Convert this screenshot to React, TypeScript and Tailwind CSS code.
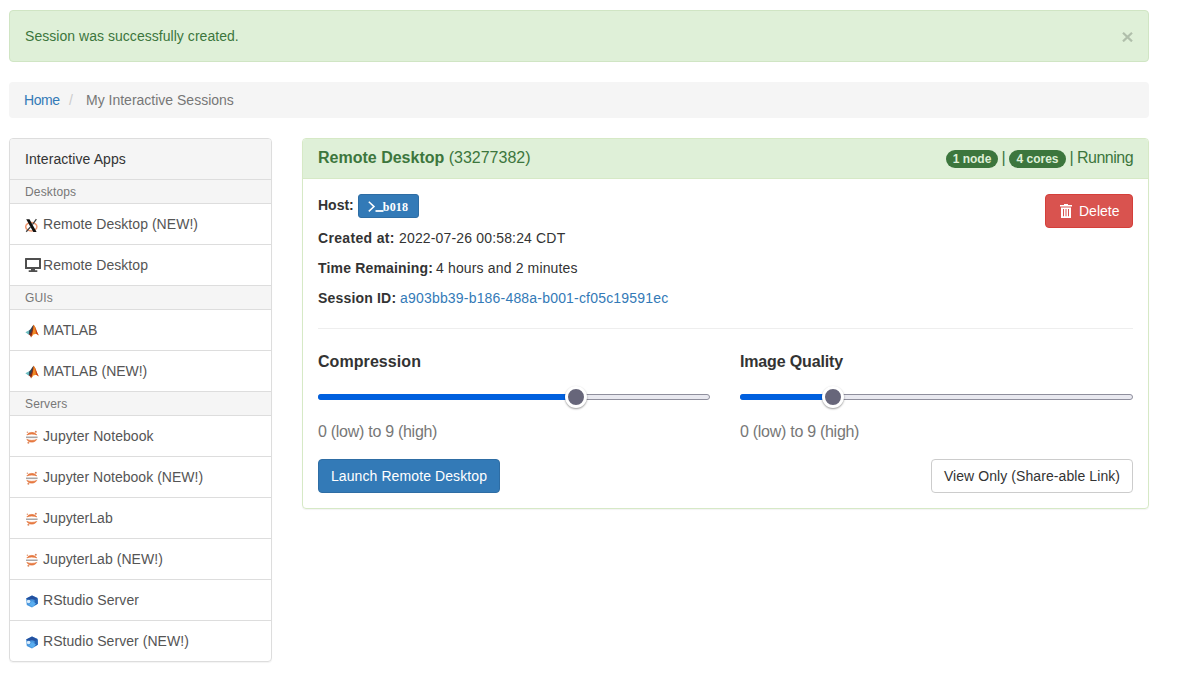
import React from "react";

function XorgIcon() {
  return (
    <svg width="14" height="15" viewBox="0 0 14 15" fill="none">
      <ellipse cx="6.3" cy="8.8" rx="5.6" ry="4.2" stroke="#e8743f" strokeWidth="1.5" strokeOpacity=".75" />
      <path d="M1.2 1.2h3.3L11.6 14H8.3z" fill="#111" />
      <path d="M11.4 1.2L7.4 6.6M5.7 8.6L1.2 13.8" stroke="#444" strokeWidth="1.3" />
    </svg>
  );
}

function DesktopIcon() {
  return (
    <svg className="-mt-[3px]" width="16" height="14" viewBox="0 0 16 14" fill="#4f4f4f">
      <path fillRule="evenodd" d="M.6 0h14.8a.6.6 0 0 1 .6.6v9.8a.6.6 0 0 1-.6.6H10v1.3h2.3V14H3.7v-1.7H6V11H.6a.6.6 0 0 1-.6-.6V.6A.6.6 0 0 1 .6 0zM2 2v7h12V2z" />
    </svg>
  );
}

function MatlabIcon() {
  return (
    <svg className="-mt-px" width="14" height="14" viewBox="0 0 14 14">
      <path d="M0.4 8.2L4.2 6.2 6.3 8.4 3.8 10.8z" fill="#6bbcbf" />
      <path d="M4.2 6.2C5.6 5.8 6.8 2.6 8.6 .8L8 8.2 5.6 10.8 3.8 10.3z" fill="#2b4557" />
      <path d="M3.8 10.5L5.7 9.3C7 8 7.6 3 8.6.8 9.7 2 10 6 8.4 9.5L6 13.4C5.5 11.8 4.9 11 3.8 10.5z" fill="#8c2712" />
      <path d="M8.6.8C10.6 2.2 11.5 8 13.8 11.4 11.7 9.8 10 9.5 8.4 10.5L6 13.4C8 8.8 8.4 4 8.6.8z" fill="#f08a26" />
      <path d="M9.4 1.8C11 4.2 12 8.8 13.8 11.4L11 9.4C10.6 6.5 10.2 4 9.4 1.8z" fill="#c63d1a" />
    </svg>
  );
}

function JupyterIcon() {
  return (
    <svg className="-mt-px ml-px" width="12" height="14" viewBox="0 0 12 14" fill="none">
      <path d="M.9 4.9C3 1.6 8.6 1.6 10.7 4.9 8 3.7 3.6 3.7 .9 4.9z" fill="#e67840" stroke="#e67840" strokeWidth=".8" />
      <path d="M.9 9.5C3 12.9 8.6 12.9 10.7 9.5 8 10.7 3.6 10.7 .9 9.5z" fill="#e67840" stroke="#e67840" strokeWidth=".8" />
      <path d="M0 7.3h11.6" stroke="#a9a6a6" strokeWidth="1.6" />
      <circle cx="1.4" cy="2.2" r=".8" fill="#e09a75" />
      <circle cx="9.8" cy="1.7" r="1" fill="#d9825a" />
      <circle cx="2.4" cy="12.8" r="1" fill="#dd8a60" />
    </svg>
  );
}

function RStudioIcon() {
  return (
    <svg className="ml-px" width="12" height="13" viewBox="0 0 12 13">
      <path d="M6 .6l5.4 2.2.5 6L6 12.4.8 10 .1 3.6z" fill="#4795dc" />
      <path d="M6 .6l5.6 2.6-1.4 2L6 4.2 2 5 .1 3.6z" fill="#24509f" />
      <path d="M8.6 5l3.2-1.4v5.2L8.6 10.6z" fill="#2765b5" />
      <path d="M3 9.6L6 6l4 2.6-3.6 3.4z" fill="#5aaef0" />
      <circle cx="2.6" cy="6.5" r="1.8" fill="#d9ecfb" />
    </svg>
  );
}

function TrashIcon() {
  return (
    <svg width="12" height="14" viewBox="0 0 12 14" fill="#fff">
      <path d="M4 0h4v1h4v1.6H0V1h4z" />
      <path fillRule="evenodd" d="M1 3.4h10V14H1zM3 5v7.2h1V5zm2.5 0v7.2h1V5zM8 5v7.2h1V5z" />
    </svg>
  );
}

type AppLink = { label: string; spacing: string; icon: React.ReactNode };
type Group = { title: string; apps: AppLink[] };

const groups: Group[] = [
  {
    title: "Desktops",
    apps: [
      { label: "Remote Desktop (NEW!)", spacing: "tracking-[0.05px]", icon: <XorgIcon /> },
      { label: "Remote Desktop", spacing: "tracking-[0.05px]", icon: <DesktopIcon /> },
    ],
  },
  {
    title: "GUIs",
    apps: [
      { label: "MATLAB", spacing: "tracking-[-0.15px]", icon: <MatlabIcon /> },
      { label: "MATLAB (NEW!)", spacing: "tracking-[-0.05px]", icon: <MatlabIcon /> },
    ],
  },
  {
    title: "Servers",
    apps: [
      { label: "Jupyter Notebook", spacing: "tracking-[0.05px]", icon: <JupyterIcon /> },
      { label: "Jupyter Notebook (NEW!)", spacing: "tracking-[0.03px]", icon: <JupyterIcon /> },
      { label: "JupyterLab", spacing: "tracking-[0.05px]", icon: <JupyterIcon /> },
      { label: "JupyterLab (NEW!)", spacing: "tracking-[0.05px]", icon: <JupyterIcon /> },
      { label: "RStudio Server", spacing: "tracking-[0.08px]", icon: <RStudioIcon /> },
      { label: "RStudio Server (NEW!)", spacing: "tracking-[0.06px]", icon: <RStudioIcon /> },
    ],
  },
];

function Sidebar() {
  return (
    <nav className="h-[524px] w-[263px] shrink-0 overflow-hidden rounded-[4px] border border-[#dddddd] shadow-[0_1px_1px_rgba(0,0,0,0.05)]">
      <div className="flex h-10 items-center bg-[#f5f5f5] pl-[15px] tracking-[0.08px] text-[#333333]">Interactive Apps</div>
      {groups.map((g) => (
        <div key={g.title}>
          <div className="flex h-6 items-center border-t border-[#dddddd] bg-[#f5f5f5] pl-[15px] text-[12px] tracking-[0.15px] text-[#777777]">
            {g.title}
          </div>
          {g.apps.map((a) => (
            <a key={a.label} className="flex h-[41px] items-center border-t border-[#dddddd] pl-[15px] text-[#555555]">
              <span className="flex w-[18px] shrink-0 pt-[3px]">{a.icon}</span>
              <span className={a.spacing}>{a.label}</span>
            </a>
          ))}
        </div>
      ))}
    </nav>
  );
}

function Slider({ label, value, spacing }: { label: string; value: number; spacing: string }) {
  return (
    <div>
      <div className={`pt-px text-[16px] leading-[22px] font-bold text-[#333333] ${spacing}`}>{label}</div>
      <div className="relative mt-[21px] h-[6px] rounded-full border border-[#8f8f9d] bg-[#e9e9f0]">
        <div className="absolute -top-px -left-px h-[6px] rounded-l-full bg-[#0060df]" style={{ width: `${value}%` }} />
        <div
          className="absolute -top-[9px] -ml-[11px] size-[22px] rounded-full border-3 border-white bg-[#67667a] shadow-[0_1px_2px_rgba(0,0,0,0.4)]"
          style={{ left: `${value}%` }}
        />
      </div>
      <div className="mt-[21px] text-[16px] leading-[22px] tracking-[-0.28px] text-[#777777]">0 (low) to 9 (high)</div>
    </div>
  );
}

export default function App() {
  return (
    <div className="h-[679px] w-[1191px] overflow-hidden bg-white pt-[10px] pl-[9px] font-['Liberation_Sans',Arial,sans-serif] text-[14px] leading-5 text-[#333333]">
      <div className="w-[1140px]">
        <div className="flex h-[52px] items-center justify-between rounded-[4px] border border-[#d0e5c4] bg-[#dff0d8] px-[15px] text-[#3c763d]">
          <span className="tracking-[0.04px]">Session was successfully created.</span>
          <svg className="mt-[2px]" width="11" height="10" viewBox="0 0 11 10" stroke="#b0bfab" strokeWidth="2.2">
            <path d="M1 .8l9 8.6M10 .8L1 9.4" />
          </svg>
        </div>

        <div className="mt-5 flex h-9 items-center rounded-[4px] bg-[#f5f5f5] pl-[15px]">
          <a className="w-9 tracking-[-0.4px] text-[#337ab7]">Home</a>
          <span className="ml-[9px] w-[17px] text-[#cccccc]">/</span>
          <span className="text-[#777777]">My Interactive Sessions</span>
        </div>

        <div className="mt-5 flex items-start gap-[30px]">
          <Sidebar />
          <section className="h-[371px] w-[847px] rounded-[4px] border border-[#d6e9c6] shadow-[0_1px_1px_rgba(0,0,0,0.05)]">
            <header className="flex h-10 items-center justify-between rounded-t-[3px] border-b border-[#d6e9c6] bg-[#dff0d8] px-[15px] pb-[2px] text-[16px] text-[#3c763d]">
              <div>
                <b>Remote Desktop</b> (33277382)
              </div>
              <div className="flex items-center">
                <span className="mt-[3px] flex h-[18px] w-[52px] items-center justify-center rounded-full bg-[#3c763d] text-[12px] font-bold text-[#dff0d8]">
                  1 node
                </span>
                <span className="w-[11px] text-center">|</span>
                <span className="mt-[3px] flex h-[18px] w-[57px] items-center justify-center rounded-full bg-[#3c763d] text-[12px] font-bold text-[#dff0d8]">
                  4 cores
                </span>
                <span className="w-[11px] text-center">|</span>
                <span className="w-14 tracking-[-0.5px]">Running</span>
              </div>
            </header>

            <div className="px-[15px] pt-[15px]">
              <div className="flex h-[134px] items-start justify-between">
                <div className="whitespace-nowrap">
                  <div className="flex h-6 items-center">
                    <b className="-mt-[2px]">Host:</b>
                    <a className="ml-1 flex h-6 w-[61px] items-center rounded-[3px] border border-[#2e6da4] bg-[#337ab7] pl-[9px] text-white">
                      <svg className="mt-px" width="16" height="12" viewBox="0 0 16 12" fill="none" stroke="#fff" strokeWidth="1.5">
                        <path d="M.8 .8L6 5.6 .8 10.4" />
                        <path d="M7.5 10h8" strokeWidth="1.8" />
                      </svg>
                      <span className="-ml-px pt-px font-['Liberation_Serif',serif] text-[12px] font-bold tracking-[0.2px]">b018</span>
                    </a>
                  </div>
                  <div className="mt-[10px] flex gap-1">
                    <b className="w-[77px] tracking-[0.33px]">Created at:</b>
                    <span className="tracking-[0.16px]">2022-07-26 00:58:24 CDT</span>
                  </div>
                  <div className="mt-[10px] flex gap-[3px]">
                    <b className="w-[115px] tracking-[0.17px]">Time Remaining:</b>
                    <span className="tracking-[0.15px]">4 hours and 2 minutes</span>
                  </div>
                  <div className="mt-[10px] flex gap-1">
                    <b className="w-[78px] tracking-[0.18px]">Session ID:</b>
                    <a className="tracking-[0.19px] text-[#337ab7]">a903bb39-b186-488a-b001-cf05c19591ec</a>
                  </div>
                </div>
                <button className="flex h-[34px] w-[88px] items-center rounded-[4px] border border-[#d43f3a] bg-[#d9534f] pl-[14px] text-white">
                  <TrashIcon />
                  <span className="ml-[7px]">Delete</span>
                </button>
              </div>

              <div className="h-px bg-[#eeeeee]" />

              <div className="mt-[21px] grid grid-cols-[392px_393px] gap-[30px]">
                <Slider label="Compression" value={65.8} spacing="tracking-[0.07px]" />
                <Slider label="Image Quality" value={23.5} spacing="tracking-[-0.15px]" />
              </div>

              <div className="mt-[16px] flex justify-between">
                <button className="h-[34px] w-[182px] rounded-[4px] border border-[#2e6da4] bg-[#337ab7] tracking-[0.1px] text-white">
                  Launch Remote Desktop
                </button>
                <button className="h-[34px] w-[202px] rounded-[4px] border border-[#cccccc] bg-white tracking-[0.08px] text-[#333333]">
                  View Only (Share-able Link)
                </button>
              </div>
            </div>
          </section>
        </div>
      </div>
    </div>
  );
}
